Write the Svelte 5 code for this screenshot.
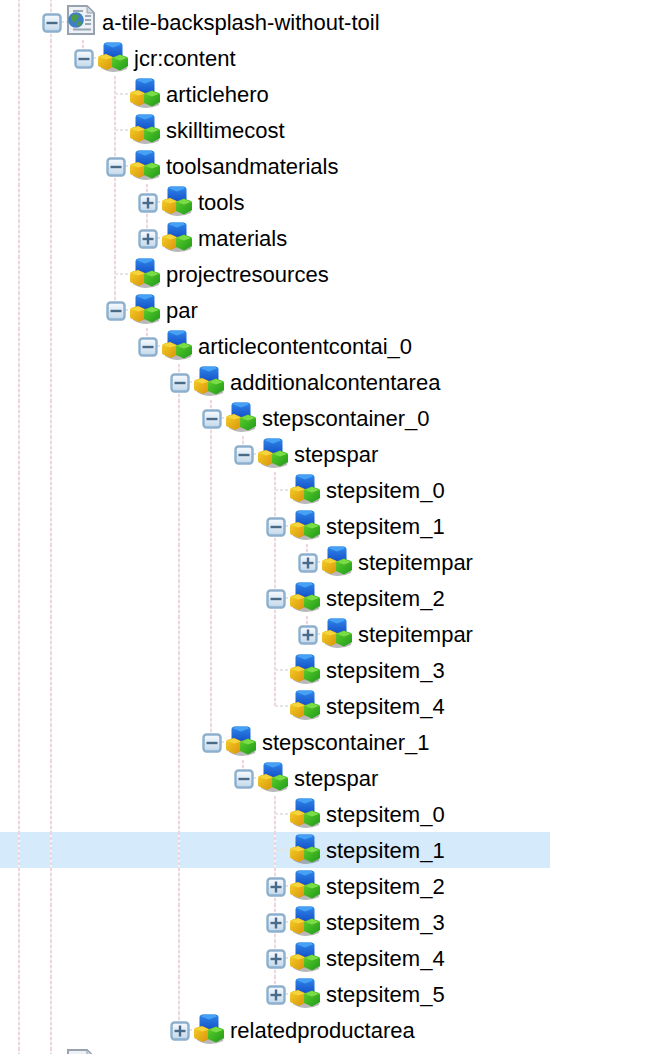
<script>
  const tree = [
    { name: '', page: true, open: true },
    { name: 'a-tile-backsplash-without-toil', page: true, open: true, kids: [
      { name: 'jcr:content', open: true, kids: [
        { name: 'articlehero' },
        { name: 'skilltimecost' },
        { name: 'toolsandmaterials', open: true, kids: [
          { name: 'tools', plus: true },
          { name: 'materials', plus: true }
        ]},
        { name: 'projectresources' },
        { name: 'par', open: true, kids: [
          { name: 'articlecontentcontai_0', open: true, kids: [
            { name: 'additionalcontentarea', open: true, kids: [
              { name: 'stepscontainer_0', open: true, kids: [
                { name: 'stepspar', open: true, kids: [
                  { name: 'stepsitem_0' },
                  { name: 'stepsitem_1', open: true, kids: [{ name: 'stepitempar', plus: true }] },
                  { name: 'stepsitem_2', open: true, kids: [{ name: 'stepitempar', plus: true }] },
                  { name: 'stepsitem_3' },
                  { name: 'stepsitem_4' }
                ]}
              ]},
              { name: 'stepscontainer_1', open: true, kids: [
                { name: 'stepspar', open: true, kids: [
                  { name: 'stepsitem_0' },
                  { name: 'stepsitem_1', selected: true },
                  { name: 'stepsitem_2', plus: true },
                  { name: 'stepsitem_3', plus: true },
                  { name: 'stepsitem_4', plus: true },
                  { name: 'stepsitem_5', plus: true }
                ]}
              ]}
            ]},
            { name: 'relatedproductarea', plus: true }
          ]}
        ]}
      ]}
    ]},
    { name: '', page: true, open: true }
  ];

  function flatten(nodes, guides, out) {
    nodes.forEach((n, i) => {
      const last = i === nodes.length - 1;
      out.push({ ...n, guides, elbow: last ? 'end' : 'tee' });
      if (n.kids) flatten(n.kids, [...guides, !last], out);
    });
    return out;
  }

  const rows = flatten(tree, [true], []);
</script>

{#snippet toggle(plus)}
  <svg class="toggle" viewBox="0 0 20 20" aria-hidden="true">
    <rect x="1.500" y="1.500" width="17" height="17" rx="3" fill="url(#tg)" stroke="#8cb0cd" stroke-width="2.400" />
    <rect x="4.500" y="8.800" width="11" height="2.400" fill="#4a6a8a" />
    {#if plus}<rect x="8.800" y="4.500" width="2.400" height="11" fill="#4a6a8a" />{/if}
  </svg>
{/snippet}

{#snippet cube()}
  <svg class="icon cube" viewBox="0 0 30 30" aria-hidden="true">
    <path d="M3 26q6 4 13 4t13-3l1-5H3z" fill="#333" opacity=".35" />
    <path d="M5.500 3Q5.500 1 8 .5h14Q24.500 1 24.500 3v12l-9.500 4-9.500-4z" fill="url(#blue)" />
    <path d="M7 2.500 9 .5h12l2 2-8 3z" fill="#46a0f4" />
    <path d="M0 16q0-2 2-2.500L8 12l8 3.500v9L9 28 1 24.500q-1-.5-1-2z" fill="url(#yellow)" />
    <path d="M1 15 8 12.500l7 3L8 17.500z" fill="#f5d53a" />
    <path d="M14 17q0-1.500 1.500-2L22 12.500l7 2.500q1 .5 1 2v7l-8 4.500-8-3.500z" fill="url(#green)" />
    <path d="M15 16 22 13l7 3-7 2.500z" fill="#7cdc48" />
  </svg>
{/snippet}

{#snippet page()}
  <svg class="icon doc" viewBox="0 0 30 30" aria-hidden="true">
    <path d="M1 1h19l7 7v21H1z" fill="#eef1f5" stroke="#98a2ae" stroke-width="2" />
    <path d="M20 1v7h7z" fill="#cfd6de" stroke="#98a2ae" stroke-width="1" />
    <path d="M18 11h6M18 15h6M18 19h6M6 24.500h18M6 6h10" stroke="#9aa7b5" stroke-width="1.800" />
    <circle cx="9" cy="15" r="7.800" fill="#3f80c4" />
    <path d="M4.500 11c3-2 6-2 7 0s-2 2-2 4-3 3-4 1-2-3-1-5zM10.500 17c2-1 4 0 4 1s-2 3-3 3-2-3-1-4z" fill="#4f9a45" />
  </svg>
{/snippet}

<div class="viewport">
  <svg class="defs" width="0" height="0" aria-hidden="true">
    <defs>
      <linearGradient id="tg" x1="0" y1="0" x2="0" y2="1"><stop offset="0" stop-color="#f7fbff" /><stop offset="1" stop-color="#c3d8ea" /></linearGradient>
      <linearGradient id="blue" x1="0" y1="0" x2="0" y2="1"><stop offset="0" stop-color="#2f86ea" /><stop offset="1" stop-color="#0f45c0" /></linearGradient>
      <linearGradient id="yellow" x1="0" y1="0" x2="1" y2="1"><stop offset="0" stop-color="#f5cf28" /><stop offset="1" stop-color="#d8920a" /></linearGradient>
      <linearGradient id="green" x1="0" y1="0" x2="1" y2="1"><stop offset="0" stop-color="#62d02c" /><stop offset="1" stop-color="#1d9a18" /></linearGradient>
    </defs>
  </svg>
  <div class="tree">
    {#each rows as r}
      <div class="row" class:selected={r.selected}>
        {#each r.guides as g}
          <span class="cell" class:line={g}></span>
        {/each}
        <span class="cell {r.elbow}">
          {#if r.open || r.plus}{@render toggle(r.plus)}{/if}
        </span>
        {#if r.page}{@render page()}{:else}{@render cube()}{/if}
        <span class="label">{r.name}</span>
      </div>
    {/each}
  </div>
</div>

<style>
  :global(body) { margin: 0; background: #fff; }
  .viewport { width: 658px; height: 1054px; overflow: hidden; }
  .defs { display: block; }
  .tree { width: 550px; margin-top: -32px; }
  .row {
    display: flex;
    align-items: center;
    height: 36px;
    padding-left: 3px;
    font: 22px "Liberation Sans", Arial, sans-serif;
    color: #000;
  }
  .selected { background: #d5eafb; }
  .cell {
    flex: none;
    display: flex;
    align-items: center;
    justify-content: center;
    width: 32px;
    height: 36px;
    background-repeat: no-repeat;
  }
  .line {
    background-image: repeating-linear-gradient(to bottom, #eed6dc 0 3px, #fbf4f6 3px 5px);
    background-size: 2px 100%;
    background-position: 15px 0;
  }
  .tee, .end {
    background-image:
      repeating-linear-gradient(to bottom, #eed6dc 0 3px, #fbf4f6 3px 5px),
      repeating-linear-gradient(to right, #e4e4e4 0 3px, transparent 3px 5px);
    background-position: 15px 0, 16px 17px;
  }
  .tee { background-size: 2px 100%, 16px 2px; }
  .end { background-size: 2px 50%, 16px 2px; }
  .toggle { width: 20px; height: 20px; display: block; margin: 2px 0 0 1px; filter: blur(.5px); }
  .icon { flex: none; width: 30px; height: 30px; margin-right: 5px; filter: blur(.6px); }
  .cube { margin: 0 6px 2px -1px; }
  .doc { margin-bottom: 5px; }
  .label { white-space: nowrap; position: relative; top: 1px; }
</style>
